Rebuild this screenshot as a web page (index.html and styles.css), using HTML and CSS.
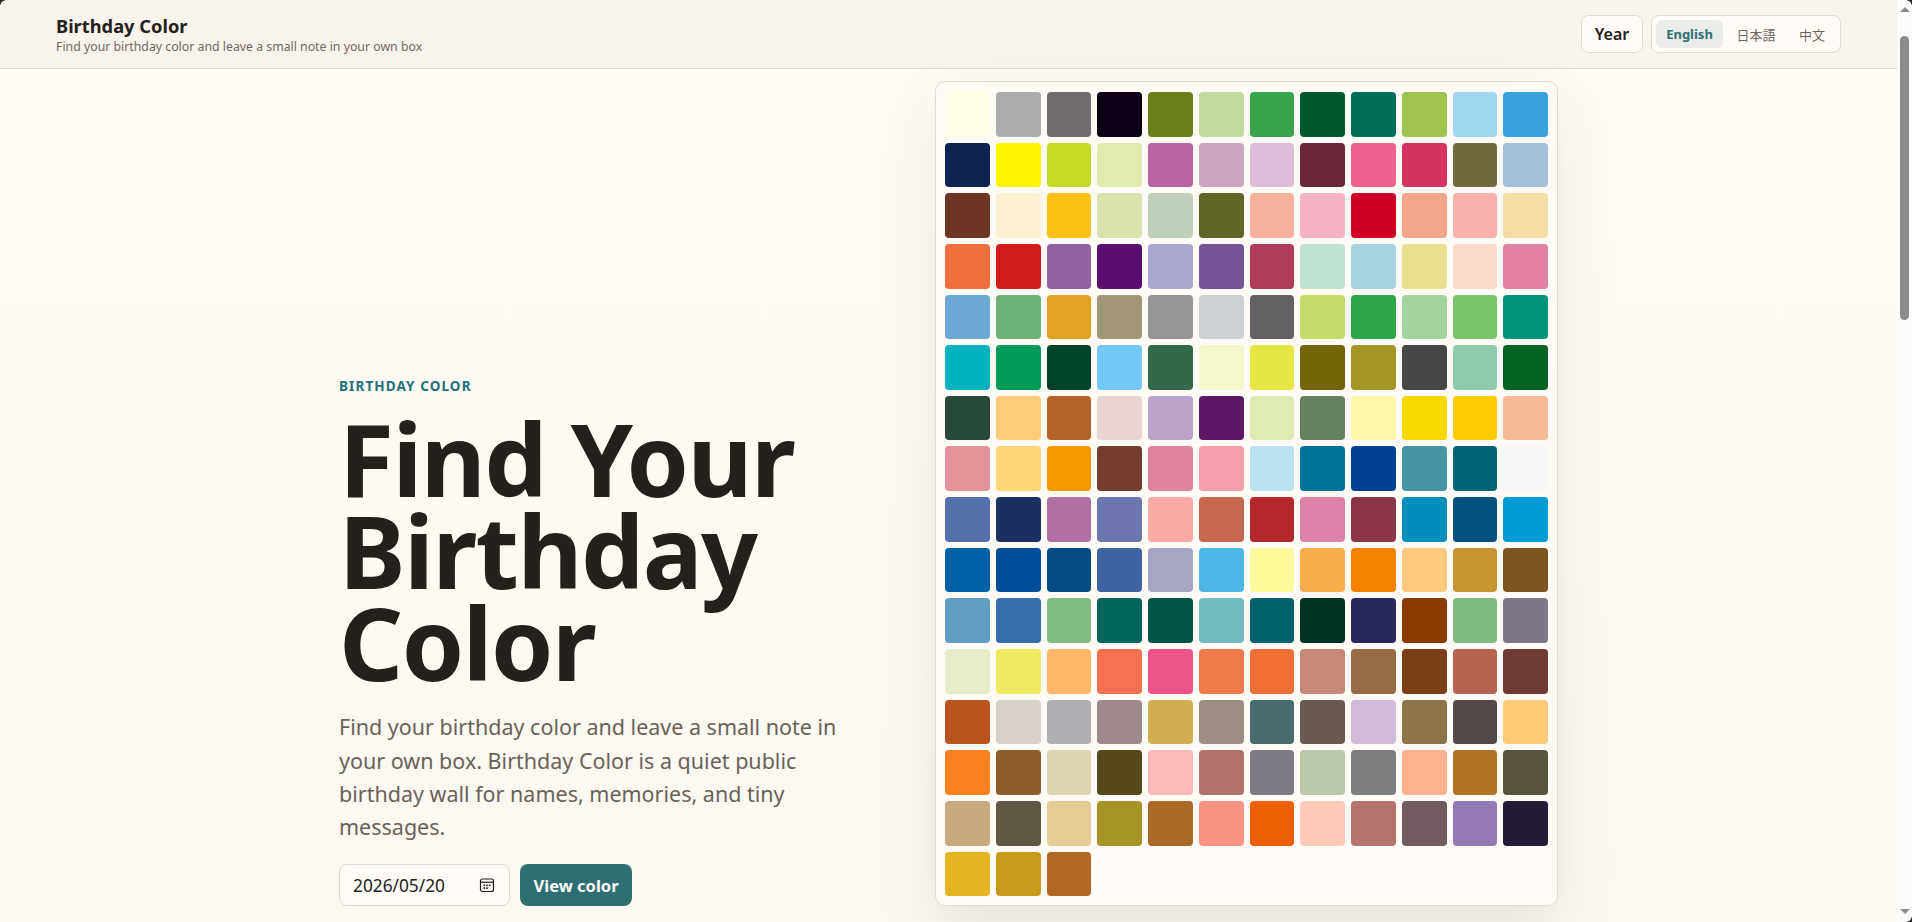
FILE: index.html
```html
<!DOCTYPE html>
<html lang="en">
<head>
<meta charset="utf-8">
<title>Birthday Color</title>
<link rel="stylesheet" href="styles.css">
</head>
<body>
<div class="app">
  <div class="page">
    <header class="topbar">
      <div class="brand">
        <strong class="brand-title">Birthday Color</strong>
        <span class="brand-sub">Find your birthday color and leave a small note in your own box</span>
      </div>
      <nav class="topnav">
        <a class="year-link">Year</a>
        <div class="lang-group">
          <a class="lang active">English</a>
          <a class="lang cjk">日本語</a>
          <a class="lang cjk">中文</a>
        </div>
      </nav>
    </header>
    <main class="hero">
      <section class="intro">
        <p class="eyebrow">BIRTHDAY COLOR</p>
        <h1 class="headline">Find Your Birthday Color</h1>
        <p class="lead">Find your birthday color and leave a small note in your own box. Birthday Color is a quiet public birthday wall for names, memories, and tiny messages.</p>
        <form class="date-form">
          <div class="date-input">
            <span>2026/05/20</span>
            <svg class="cal-icon" viewBox="0 0 16 16" width="16" height="16" aria-hidden="true">
              <rect x="1.5" y="2" width="13" height="12.5" rx="2" fill="none" stroke="#1c1b19" stroke-width="1.2"/>
              <path d="M1.5 5.2h13" stroke="#1c1b19" stroke-width="1.2" fill="none"/>
              <path d="M4.5 7.5h1.6v1.6H4.5zM7.2 7.5h1.6v1.6H7.2zM9.9 7.5h1.6v1.6H9.9zM4.5 10.3h1.6v1.6H4.5zM7.2 10.3h1.6v1.6H7.2z" fill="#1c1b19"/>
            </svg>
          </div>
          <button class="view-btn" type="button">View color</button>
        </form>
      </section>
      <section class="palette">
        <div class="swatches">
<a class="swatch" style="background:#ffffe8"></a><a class="swatch" style="background:#adadad"></a><a class="swatch" style="background:#736c6f"></a><a class="swatch" style="background:#0d0015"></a><a class="swatch" style="background:#6a801c"></a><a class="swatch" style="background:#bfd99f"></a><a class="swatch" style="background:#38a44c"></a><a class="swatch" style="background:#00582e"></a><a class="swatch" style="background:#006f58"></a><a class="swatch" style="background:#a0c24e"></a><a class="swatch" style="background:#a0d8ef"></a><a class="swatch" style="background:#38a1db"></a>
<a class="swatch" style="background:#0f2350"></a><a class="swatch" style="background:#fff500"></a><a class="swatch" style="background:#c4da23"></a><a class="swatch" style="background:#e0ebaf"></a><a class="swatch" style="background:#bb62a1"></a><a class="swatch" style="background:#cba6bf"></a><a class="swatch" style="background:#dfbdd9"></a><a class="swatch" style="background:#6b2737"></a><a class="swatch" style="background:#ed618f"></a><a class="swatch" style="background:#d63460"></a><a class="swatch" style="background:#706b3e"></a><a class="swatch" style="background:#a4bfd8"></a>
<a class="swatch" style="background:#6c3524"></a><a class="swatch" style="background:#fff0d2"></a><a class="swatch" style="background:#fbc014"></a><a class="swatch" style="background:#d9e3ae"></a><a class="swatch" style="background:#bfcfbc"></a><a class="swatch" style="background:#5f6527"></a><a class="swatch" style="background:#f6b19c"></a><a class="swatch" style="background:#f6b2c5"></a><a class="swatch" style="background:#ce0024"></a><a class="swatch" style="background:#f4a68c"></a><a class="swatch" style="background:#f8b1ab"></a><a class="swatch" style="background:#f4dca6"></a>
<a class="swatch" style="background:#f06f3e"></a><a class="swatch" style="background:#d01c1c"></a><a class="swatch" style="background:#925fa1"></a><a class="swatch" style="background:#590e70"></a><a class="swatch" style="background:#aba8cf"></a><a class="swatch" style="background:#765497"></a><a class="swatch" style="background:#b03c5c"></a><a class="swatch" style="background:#bfe2d3"></a><a class="swatch" style="background:#a5d3e0"></a><a class="swatch" style="background:#ebe090"></a><a class="swatch" style="background:#fbdac8"></a><a class="swatch" style="background:#e381a4"></a>
<a class="swatch" style="background:#6aaad2"></a><a class="swatch" style="background:#6cb277"></a><a class="swatch" style="background:#e3a322"></a><a class="swatch" style="background:#a19675"></a><a class="swatch" style="background:#959595"></a><a class="swatch" style="background:#cad0d4"></a><a class="swatch" style="background:#636163"></a><a class="swatch" style="background:#c6dc68"></a><a class="swatch" style="background:#2ca84b"></a><a class="swatch" style="background:#a2d39a"></a><a class="swatch" style="background:#7bc46b"></a><a class="swatch" style="background:#00957a"></a>
<a class="swatch" style="background:#00b3bf"></a><a class="swatch" style="background:#009b57"></a><a class="swatch" style="background:#004326"></a><a class="swatch" style="background:#72c7f7"></a><a class="swatch" style="background:#33694a"></a><a class="swatch" style="background:#f5f6cc"></a><a class="swatch" style="background:#e6e646"></a><a class="swatch" style="background:#74640a"></a><a class="swatch" style="background:#a59626"></a><a class="swatch" style="background:#464646"></a><a class="swatch" style="background:#8dcaae"></a><a class="swatch" style="background:#056323"></a>
<a class="swatch" style="background:#274a38"></a><a class="swatch" style="background:#fbcd7b"></a><a class="swatch" style="background:#b36228"></a><a class="swatch" style="background:#e8d4d2"></a><a class="swatch" style="background:#bca3c9"></a><a class="swatch" style="background:#5c1765"></a><a class="swatch" style="background:#dfebb4"></a><a class="swatch" style="background:#667f60"></a><a class="swatch" style="background:#fff9a9"></a><a class="swatch" style="background:#f7d800"></a><a class="swatch" style="background:#fdcb00"></a><a class="swatch" style="background:#f7b996"></a>
<a class="swatch" style="background:#e39299"></a><a class="swatch" style="background:#fdd676"></a><a class="swatch" style="background:#f79a00"></a><a class="swatch" style="background:#753c30"></a><a class="swatch" style="background:#e1829c"></a><a class="swatch" style="background:#f49dab"></a><a class="swatch" style="background:#bae2f1"></a><a class="swatch" style="background:#00729e"></a><a class="swatch" style="background:#004191"></a><a class="swatch" style="background:#4695a4"></a><a class="swatch" style="background:#006475"></a><a class="swatch" style="background:#f8f8f8"></a>
<a class="swatch" style="background:#5471ad"></a><a class="swatch" style="background:#193060"></a><a class="swatch" style="background:#b170a4"></a><a class="swatch" style="background:#6d77ad"></a><a class="swatch" style="background:#fba9a3"></a><a class="swatch" style="background:#c66850"></a><a class="swatch" style="background:#b5272d"></a><a class="swatch" style="background:#df82a9"></a><a class="swatch" style="background:#8c3449"></a><a class="swatch" style="background:#008fbb"></a><a class="swatch" style="background:#02517e"></a><a class="swatch" style="background:#009ad7"></a>
<a class="swatch" style="background:#0063a8"></a><a class="swatch" style="background:#004f98"></a><a class="swatch" style="background:#034b85"></a><a class="swatch" style="background:#3f63a2"></a><a class="swatch" style="background:#a6a5c4"></a><a class="swatch" style="background:#4db7e7"></a><a class="swatch" style="background:#fff99b"></a><a class="swatch" style="background:#f7ad4a"></a><a class="swatch" style="background:#f18300"></a><a class="swatch" style="background:#fdc97f"></a><a class="swatch" style="background:#c59530"></a><a class="swatch" style="background:#7d551e"></a>
<a class="swatch" style="background:#5f9fc1"></a><a class="swatch" style="background:#356eac"></a><a class="swatch" style="background:#81bd80"></a><a class="swatch" style="background:#00655a"></a><a class="swatch" style="background:#005545"></a><a class="swatch" style="background:#70bcc1"></a><a class="swatch" style="background:#01626e"></a><a class="swatch" style="background:#003321"></a><a class="swatch" style="background:#29285c"></a><a class="swatch" style="background:#8a3b00"></a><a class="swatch" style="background:#7fbb7f"></a><a class="swatch" style="background:#7e7786"></a>
<a class="swatch" style="background:#e5eec8"></a><a class="swatch" style="background:#eee960"></a><a class="swatch" style="background:#feb66a"></a><a class="swatch" style="background:#f6714f"></a><a class="swatch" style="background:#ed5489"></a><a class="swatch" style="background:#f07b4a"></a><a class="swatch" style="background:#f16e36"></a><a class="swatch" style="background:#c68976"></a><a class="swatch" style="background:#966c46"></a><a class="swatch" style="background:#7c3f1a"></a><a class="swatch" style="background:#b66451"></a><a class="swatch" style="background:#6f3c33"></a>
<a class="swatch" style="background:#b9541f"></a><a class="swatch" style="background:#d8d0cb"></a><a class="swatch" style="background:#b0afb4"></a><a class="swatch" style="background:#9f8a8b"></a><a class="swatch" style="background:#d1af4e"></a><a class="swatch" style="background:#9e8f85"></a><a class="swatch" style="background:#4a6b6b"></a><a class="swatch" style="background:#685a50"></a><a class="swatch" style="background:#d1bada"></a><a class="swatch" style="background:#8d7348"></a><a class="swatch" style="background:#534946"></a><a class="swatch" style="background:#fec976"></a>
<a class="swatch" style="background:#f88220"></a><a class="swatch" style="background:#8c5e2a"></a><a class="swatch" style="background:#ddd4b1"></a><a class="swatch" style="background:#57481c"></a><a class="swatch" style="background:#fbb9bb"></a><a class="swatch" style="background:#b37269"></a><a class="swatch" style="background:#7e7b84"></a><a class="swatch" style="background:#bbc8ac"></a><a class="swatch" style="background:#7d7e80"></a><a class="swatch" style="background:#feb28f"></a><a class="swatch" style="background:#b27125"></a><a class="swatch" style="background:#57533f"></a>
<a class="swatch" style="background:#c9a980"></a><a class="swatch" style="background:#5f5843"></a><a class="swatch" style="background:#e5cc96"></a><a class="swatch" style="background:#a69525"></a><a class="swatch" style="background:#aa6925"></a><a class="swatch" style="background:#f99484"></a><a class="swatch" style="background:#ef6000"></a><a class="swatch" style="background:#ffcbb8"></a><a class="swatch" style="background:#b4746d"></a><a class="swatch" style="background:#735a60"></a><a class="swatch" style="background:#9379b4"></a><a class="swatch" style="background:#241b39"></a>
<a class="swatch" style="background:#e5b423"></a><a class="swatch" style="background:#c99919"></a><a class="swatch" style="background:#b26823"></a>
        </div>
      </section>
    </main>
  </div>
  <div class="scrollbar" aria-hidden="true">
    <span class="arrow-up"></span>
    <span class="thumb"></span>
    <span class="arrow-down"></span>
  </div>
  <span class="corner corner-tl"></span>
  <span class="corner corner-tr"></span>
  <span class="corner corner-br"></span>
</div>
</body>
</html>
```
FILE: styles.css
```css
* { box-sizing: border-box; }
html, body { margin: 0; height: 100%; overflow: hidden; }
body {
  font-family: "Noto Sans", "Open Sans", "Noto Sans CJK JP", sans-serif;
  color: #24211c;
  background: #fff;
}
.app { position: relative; display: flex; height: 922px; }
.page {
  flex: 1;
  min-width: 0;
  background: linear-gradient(180deg, #fffcf6 0%, #fcf8f2 100%);
}
.topbar {
  height: 69px;
  padding: 0 56px;
  display: flex;
  align-items: center;
  justify-content: space-between;
  background: #f7f3ed;
  border-bottom: 1px solid #dcd8d0;
}
.brand { display: flex; flex-direction: column; }
.brand-title { font-size: 18.3px; font-weight: 700; line-height: 24px; }
.brand-sub { font-size: 12.3px; line-height: 17px; color: #716a62; }
.topnav { display: flex; gap: 8px; align-items: center; }
.year-link {
  width: 62px;
  height: 38px;
  display: flex;
  align-items: center;
  justify-content: center;
  font-size: 16px;
  font-weight: 600;
  background: #fffcf8;
  border: 1px solid #e0dcd5;
  border-radius: 8px;
}
.lang-group {
  height: 38px;
  width: 190px;
  display: flex;
  align-items: center;
  padding: 0 4px;
  background: #fffcf8;
  border: 1px solid #e0dcd5;
  border-radius: 8px;
}
.lang {
  height: 28px;
  display: flex;
  align-items: center;
  justify-content: center;
  font-size: 13px;
  color: #6f675f;
  border-radius: 6px;
}
.lang:nth-child(1) { width: 67px; }
.lang:nth-child(2) { width: 66px; }
.lang:nth-child(3) { width: 46px; }
.lang.active { background: #e9ece9; color: #2f6f73; font-weight: 700; }
.hero {
  width: 1219px;
  margin: 0 auto;
  padding-top: 12px;
  display: flex;
  justify-content: space-between;
  align-items: flex-end;
}
.intro { width: 520px; }
.eyebrow {
  margin: 0 0 17px;
  font-size: 13.5px;
  font-weight: 700;
  letter-spacing: 1.1px;
  line-height: 18px;
  color: #1f6f7c;
}
.headline {
  margin: 0 0 22px;
  font-size: 100px;
  font-weight: 700;
  line-height: 92px;
  letter-spacing: -1.5px;
  color: #24211c;
}
.lead {
  margin: 0 0 21px;
  width: 520px;
  font-size: 21.5px;
  line-height: 33.2px;
  color: #6a6259;
}
.date-form { display: flex; gap: 10px; }
.date-input {
  width: 171px;
  height: 42px;
  padding: 0 14px 0 13px;
  display: flex;
  align-items: center;
  justify-content: space-between;
  font-size: 17.3px;
  background: #fffcf8;
  border: 1px solid #e0dcd5;
  border-radius: 8px;
}
.cal-icon { flex: none; }
.view-btn {
  width: 112px;
  height: 42px;
  padding: 0;
  font-family: inherit;
  font-size: 16.5px;
  font-weight: 700;
  color: #fffdf8;
  background: #2f6f73;
  border: 0;
  border-radius: 8px;
}
.palette {
  width: 623px;
  padding: 10px 9px 9px;
  background: #fefbf6;
  border: 1px solid #e0dcd5;
  border-radius: 10px;
  box-shadow: 0 24px 60px rgba(60, 50, 40, 0.1);
}
.swatches {
  display: grid;
  grid-template-columns: repeat(12, 1fr);
  gap: 6px;
}
.swatch { display: block; height: 44.65px; border-radius: 4px; }
.scrollbar {
  width: 15px;
  flex: none;
  display: flex;
  flex-direction: column;
  align-items: center;
  background: #fcfcfc;
  padding: 7px 0 8px;
}
.arrow-up, .arrow-down { width: 0; height: 0; border-left: 5px solid transparent; border-right: 5px solid transparent; }
.arrow-up { border-bottom: 5px solid #8c8c8c; }
.arrow-down { border-top: 5px solid #8c8c8c; margin-top: auto; }
.thumb { width: 9px; height: 284px; margin-top: 24px; background: #8c8c8c; border-radius: 5px; }
.corner { position: absolute; width: 6px; height: 6px; }
.corner-tl { top: 0; left: 0; background: radial-gradient(circle at 100% 100%, transparent 5.5px, #2a2a2a 6px); }
.corner-tr { top: 0; right: 0; background: radial-gradient(circle at 0 100%, transparent 5.5px, #2a2a2a 6px); }
.corner-br { bottom: 0; right: 0; background: radial-gradient(circle at 0 0, transparent 5.5px, #2a2a2a 6px); }
```
